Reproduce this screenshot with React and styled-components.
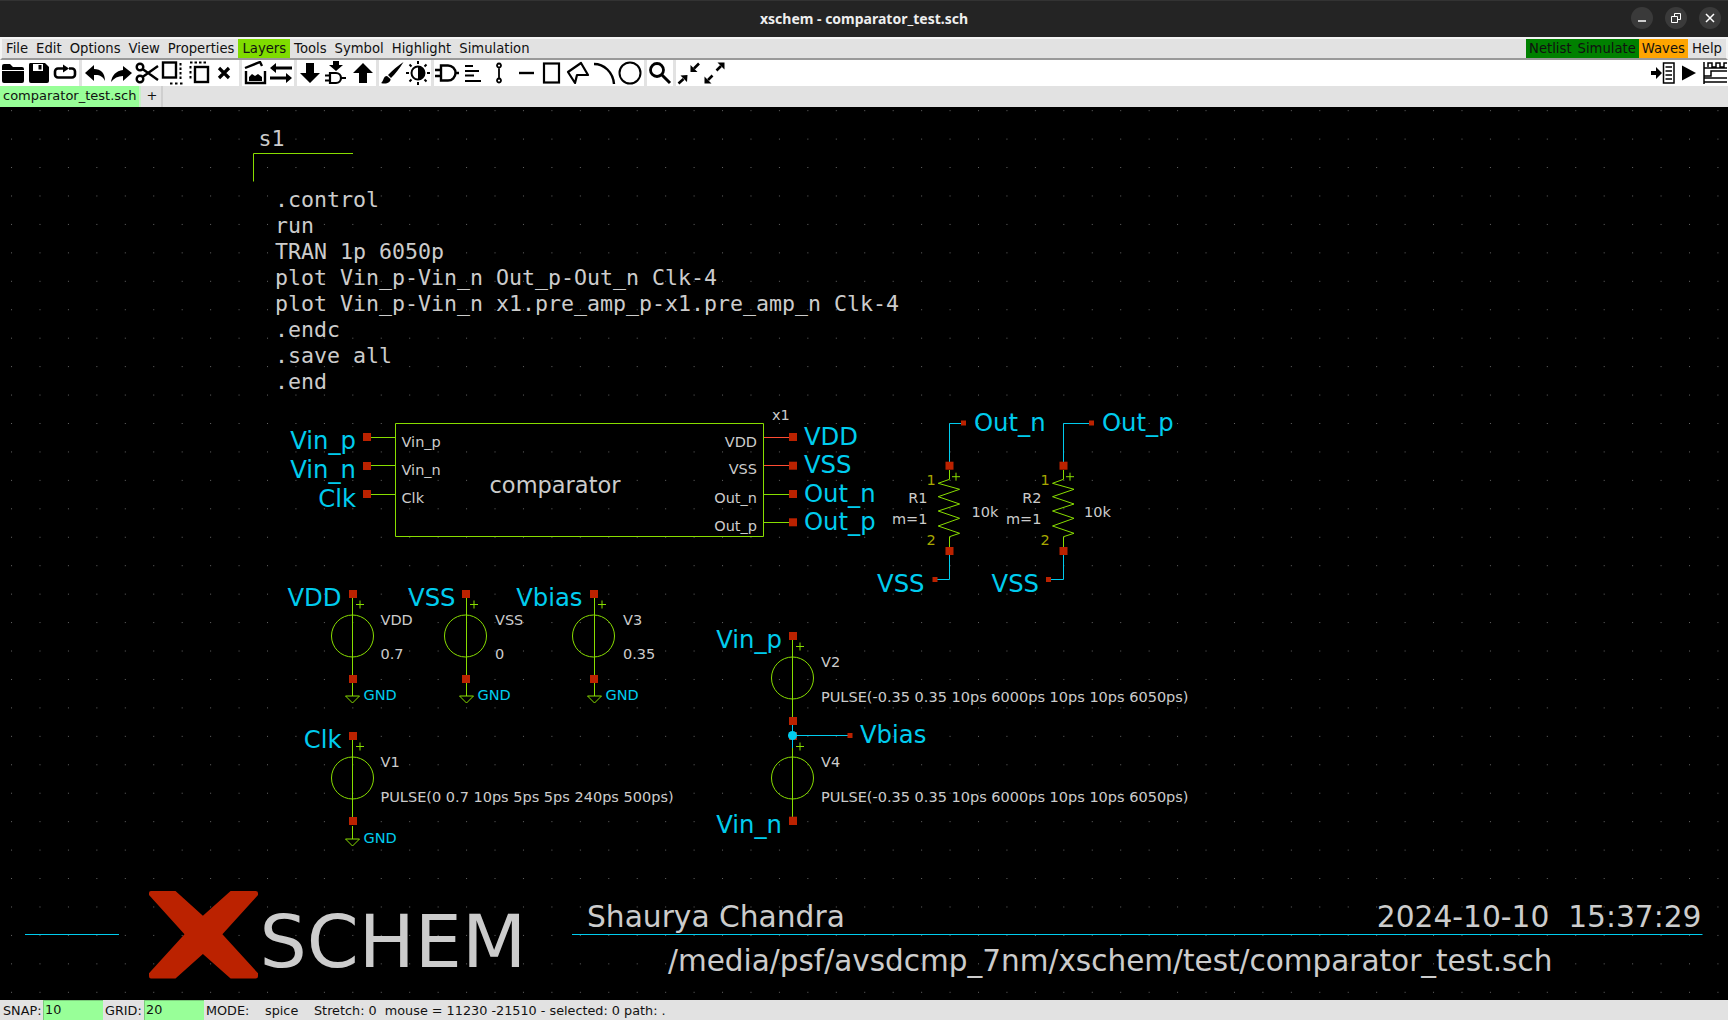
import React from 'react'
import styled, { createGlobalStyle } from 'styled-components'

const LIME = '#88dd00'
const CYAN = '#00ccee'
const PIN_RED = '#bb2200'
const TEXT_GREY = '#cccccc'
const NET_SIZE = 24.3

const GlobalStyle = createGlobalStyle`
  html, body {
    margin: 0;
    padding: 0;
    background: #000;
  }
`

const Page = styled.div`
  width: 1728px;
  height: 1020px;
  display: flex;
  flex-direction: column;
  overflow: hidden;
  font-family: 'DejaVu Sans', sans-serif;
  font-size: 13px;
  color: #111;
`

const TitleBar = styled.div`
  height: 37px;
  flex: none;
  background: #242424;
  border-top: 1px solid #333;
  box-sizing: border-box;
  display: flex;
  align-items: center;
  position: relative;
`

const TitleText = styled.div`
  flex: 1;
  text-align: center;
  color: #eee;
  font-family: 'Noto Sans', sans-serif;
  font-size: 14px;
  font-weight: 700;
  margin-top: -2px;
`

const WindowControls = styled.div`
  position: absolute;
  right: 7px;
  top: 6px;
  display: flex;
  gap: 12px;
`

const WindowButton = styled.div`
  width: 22px;
  height: 22px;
  border-radius: 50%;
  background: #3a3a3a;
  display: flex;
  align-items: center;
  justify-content: center;
`

const MenuBar = styled.div`
  height: 23px;
  flex: none;
  box-sizing: border-box;
  background: #e2e2e2;
  border-top: 2px solid #f4f4f4;
  border-left: 2px solid #f4f4f4;
  border-right: 2px solid #f4f4f4;
  border-bottom: 2px solid #999;
  display: flex;
  white-space: nowrap;
  font-size: 13.2px;
`

const MenuItem = styled.div`
  padding: 0 ${({ $tight }) => ($tight ? '3px' : '4px')};
  line-height: 19px;
  background: ${({ $bg }) => $bg || 'transparent'};
  margin-left: ${({ $push }) => ($push ? 'auto' : '0')};
`

const ToolBar = styled.div`
  height: 26px;
  flex: none;
  background: #fff;
  display: flex;
`

const ToolGroup = styled.div`
  display: flex;
  margin-left: ${({ $push }) => ($push ? 'auto' : '0')};
  border-right: ${({ $sep }) => ($sep ? '3px solid #e2e2e2' : 'none')};
`

const ToolButton = styled.div`
  width: 26.2px;
  height: 26px;
  display: flex;
  align-items: center;
  justify-content: center;
`

const ToolIcon = styled.svg`
  width: 24px;
  height: 24px;
  flex: none;
  fill: #000;
  stroke: none;
`

const TabBar = styled.div`
  height: 21px;
  flex: none;
  background: #e2e2e2;
  display: flex;
  white-space: nowrap;
`

const Tab = styled.div`
  padding: 0 ${({ $active }) => ($active ? '3px' : '4px')};
  line-height: 20px;
  text-align: center;
  background: ${({ $active }) => ($active ? '#98ff98' : '#e2e2e2')};
  border-right: 2px solid ${({ $active }) => ($active ? '#c8f0c8' : '#cfcfcf')};
  margin-right: 1px;
`

const Canvas = styled.svg`
  flex: 1;
  display: block;
  width: 1728px;
  height: 893px;
  background: #000;
`

const StatusBar = styled.div`
  height: 20px;
  flex: none;
  background: #e2e2e2;
  display: flex;
  align-items: center;
  white-space: pre;
  font-size: 12.8px;
`

const StatusLabel = styled.span`
  width: ${({ $w }) => $w}px;
  flex: none;
  padding-left: ${({ $pl }) => $pl || 0}px;
  box-sizing: border-box;
`

const StatusField = styled.span`
  width: ${({ $w }) => $w}px;
  height: 20px;
  flex: none;
  box-sizing: border-box;
  background: #98ff98;
  border-left: 1px solid #7ccc7c;
  border-top: 1px solid #7ccc7c;
  padding-left: 1px;
  line-height: 18px;
`

const SheetText = styled.text`
  font-family: ${({ $mono }) =>
    $mono ? "'DejaVu Sans Mono', monospace" : "'DejaVu Sans', sans-serif"};
  font-size: ${({ $size }) => $size || 14.5}px;
  fill: ${({ $color }) => $color || TEXT_GREY};
  text-anchor: ${({ $end }) => ($end ? 'end' : 'start')};
  white-space: pre;
`

const NetLabel = ({ children, ...rest }) => (
  <SheetText $size={NET_SIZE} $color={CYAN} dy="1" {...rest}>
    {children}
  </SheetText>
)

const Wire = styled.path`
  fill: none;
  stroke: ${({ $color }) => $color || LIME};
  stroke-width: 1;
`

const ICONS = {
  folder: (
    <path d="M1 5a2 2 0 0 1 2-2h6l3 3h9a2 2 0 0 1 2 2v1H1zM1 10h22v10a2 2 0 0 1-2 2H3a2 2 0 0 1-2-2z" />
  ),
  save: (
    <path
      fillRule="evenodd"
      d="M3 2h15l4 4v14a2 2 0 0 1-2 2H4a2 2 0 0 1-2-2V4a2 2 0 0 1 1-2zM6 3v7h10V3zM11.5 4h3v4.5h-3z"
    />
  ),
  reload: (
    <>
      <path
        d="M10 7.5H5a3 3 0 0 0-3 3v3a3 3 0 0 0 3 3h14a3 3 0 0 0 3-3v-3a3 3 0 0 0-3-3h-3"
        fill="none"
        stroke="#000"
        strokeWidth="2.6"
      />
      <path d="M10 3.5l6 4-6 4z" />
    </>
  ),
  undo: <path d="M11 4L2 12l9 8v-6c5-.5 9 1 11 6 0-8-4-12-11-12z" />,
  redo: <path d="M14 5l9 7-9 8v-5C9 15 5 17 2 21c1-7 5-11 12-12z" />,
  scissors: (
    <g fill="none" stroke="#000" strokeWidth="2.4">
      <circle cx="5" cy="6" r="3.3" />
      <circle cx="5" cy="18" r="3.3" />
      <path d="M7.5 8L23 19M7.5 16L23 5" />
    </g>
  ),
  copy: (
    <g fill="none" stroke="#000">
      <rect x="2" y="1.5" width="13" height="15" strokeWidth="2.4" />
      <path d="M19.5 2v16" strokeWidth="2" strokeDasharray="2.5 2" />
      <path d="M9 22.5h13" strokeWidth="2" strokeDasharray="2.5 2.5" />
    </g>
  ),
  move: (
    <g fill="none" stroke="#000">
      <rect x="8" y="6" width="13" height="15" strokeWidth="2.4" />
      <path d="M3 1.5h16" strokeWidth="2" strokeDasharray="2.5 2" />
      <path d="M3.5 5v13" strokeWidth="2" strokeDasharray="2.5 2.5" />
    </g>
  ),
  close: <path d="M5 7l10 10M15 7L5 17" fill="none" stroke="#000" strokeWidth="3.2" />,
  hierarchy: (
    <>
      <path d="M3 10v12h19V10M2 7l15-6 2 4" fill="none" stroke="#000" strokeWidth="2.4" />
      <path d="M6 20v-4l3-3 3 2 3-2 4 3v4z" />
    </>
  ),
  swap: <path d="M1 7l6-5v3.5h16v3H7V12zM23 17l-6-5v3.5H1v3h16V22z" />,
  down: <path d="M8 2h8v10h6L12 22 2 12h6z" />,
  downGate: (
    <>
      <path d="M9 0h6v4h4l-7 6-7-6h4z" />
      <path
        d="M6 12h6a5 5 0 0 1 0 10H6zM1 14.5h5M1 19.5h5M17 17h5"
        fill="none"
        stroke="#000"
        strokeWidth="2.2"
      />
    </>
  ),
  up: <path d="M8 22h8V12h6L12 2 2 12h6z" />,
  brush: (
    <path d="M23.5 1C18 5 12 9.5 8 14l3 3C15 13 20 7 23.5 1zM7 15c-4 0-3 5-6 7 5 1.5 10-.5 9.5-4z" />
  ),
  sun: (
    <>
      <circle cx="12" cy="12" r="6.5" fill="none" stroke="#000" strokeWidth="2" />
      <path d="M12 5.5a6.5 6.5 0 0 1 0 13z" />
      <path
        d="M12 0v3M12 21v3M0 12h3M21 12h3M3.5 3.5l2 2M18.5 18.5l2 2M3.5 20.5l2-2M18.5 5.5l2-2"
        fill="none"
        stroke="#000"
        strokeWidth="2"
      />
    </>
  ),
  gate: (
    <path
      d="M6 4.5h7a7.5 7.5 0 0 1 0 15H6zM0 9h6M0 15h6M20.5 12H24"
      fill="none"
      stroke="#000"
      strokeWidth="2.4"
    />
  ),
  lines: (
    <path d="M4 5h8M4 10h14M4 14.5h9M4 20h16" fill="none" stroke="#000" strokeWidth="2" />
  ),
  net: (
    <path
      d="M12 6v12M12 2.5a2 2 0 1 0 .01 0M12 17.5a2 2 0 1 0 .01 0"
      fill="none"
      stroke="#000"
      strokeWidth="1.8"
    />
  ),
  dash: <path d="M5 12h15" fill="none" stroke="#000" strokeWidth="2.4" />,
  rect: <rect x="4" y="2.5" width="15" height="19" fill="none" stroke="#000" strokeWidth="2.2" />,
  poly: (
    <path
      d="M15 2l7 12-11 0-2 8-7-11z"
      fill="none"
      stroke="#000"
      strokeWidth="2.2"
      strokeLinejoin="round"
    />
  ),
  arc: <path d="M2 3c10 0 19 8 20 20" fill="none" stroke="#000" strokeWidth="2.4" />,
  circle: <circle cx="12" cy="12" r="10.5" fill="none" stroke="#000" strokeWidth="2" />,
  zoom: (
    <>
      <circle cx="9" cy="9" r="6.5" fill="none" stroke="#000" strokeWidth="2.8" />
      <path d="M13.5 13.5L22 22" fill="none" stroke="#000" strokeWidth="3" />
    </>
  ),
  shrink: (
    <>
      <path d="M3.5 14.5l7-.5-.5 7zM13.5 11V4l7 7z" />
      <path d="M6.5 18l-5 4.5M17 7.5l5-5" fill="none" stroke="#000" strokeWidth="2.6" />
    </>
  ),
  expand: (
    <>
      <path d="M1.5 22.5v-7l7 7zM21.5 1.5v7l-7-7z" />
      <path d="M5 19l4.5-4.5M18 5l-4.5 4.5" fill="none" stroke="#000" strokeWidth="2.6" />
    </>
  ),
  netlist: (
    <>
      <path d="M0 10h5V6l6 6-6 6v-4H0z" />
      <rect x="12.5" y="2" width="10.5" height="20" fill="none" stroke="#000" strokeWidth="1.5" />
      <path
        d="M14.5 6h6.5M14.5 10h6.5M14.5 14h6.5M14.5 18h6.5"
        fill="none"
        stroke="#000"
        strokeWidth="1.5"
      />
    </>
  ),
  play: <path d="M5 4.5l14 7.5-14 7.5z" />,
  waves: (
    <path
      d="M1 1v22M1 7h23M1 17h23M1 21h23M5 6V2h4v4h4V2h4v4h4V2h3M1 15h7v-5h16"
      fill="none"
      stroke="#000"
      strokeWidth="1.5"
    />
  ),
}

const TOOL_GROUPS = [
  ['folder', 'save', 'reload'],
  ['undo', 'redo', 'scissors', 'copy', 'move', 'close'],
  ['hierarchy', 'swap'],
  ['down', 'downGate', 'up'],
  ['brush', 'sun'],
  ['gate', 'lines', 'net', 'dash', 'rect', 'poly', 'arc', 'circle'],
  ['zoom'],
]

const MENU = [
  'File',
  'Edit',
  'Options',
  'View',
  'Properties',
  'Layers',
  'Tools',
  'Symbol',
  'Highlight',
  'Simulation',
]

const CODE_LINES = [
  '.control',
  'run',
  'TRAN 1p 6050p',
  'plot Vin_p-Vin_n Out_p-Out_n Clk-4',
  'plot Vin_p-Vin_n x1.pre_amp_p-x1.pre_amp_n Clk-4',
  '.endc',
  '.save all',
  '.end',
]

const PULSE_DIFF = 'PULSE(-0.35 0.35 10ps 6000ps 10ps 10ps 6050ps)'

const Tool = ({ name }) => (
  <ToolButton>
    <ToolIcon viewBox="0 0 24 24">{ICONS[name]}</ToolIcon>
  </ToolButton>
)

const PinBox = ({ x, y, size = 8 }) => (
  <rect x={x - size / 2} y={y - size / 2} width={size} height={size} fill={PIN_RED} />
)

const Plus = ({ x, y }) => <Wire d={`M${x - 4} ${y}h8M${x} ${y - 4}v8`} />

const Ground = ({ x, y }) => (
  <>
    <Wire d={`M${x} ${y - 13}V${y}M${x - 7} ${y}h14L${x} ${y + 7}Z`} />
    <SheetText x={x + 11} y={y + 4} $color={CYAN}>
      GND
    </SheetText>
  </>
)

// voltage source: top pin, circle, bottom pin
const Source = ({ x, top, name, value, textX, valueY = 65, pinX = x + 0.5, circleX = x }) => (
  <>
    <Wire d={`M${x} ${top}V${top + 85}`} />
    <circle cx={circleX} cy={top + 42} r="21" fill="none" stroke={LIME} />
    <Plus x={x + 7.5} y={top + 10.5} />
    <PinBox x={pinX} y={top} />
    <PinBox x={pinX} y={top + 85} />
    <SheetText x={textX} y={top + 30.5}>
      {name}
    </SheetText>
    <SheetText x={textX} y={top + valueY}>
      {value}
    </SheetText>
  </>
)

const RES_Y = [479.3, 483.3, 489.3, 496.7, 504, 511, 518.3, 526, 533.3, 536.7]

// resistor with its two stub wires and the attribute texts
const Resistor = ({ x, left, right, name, textEnd, valueX, numX }) => {
  const pts = RES_Y.map((y, i) => {
    if (i === 0 || i === RES_Y.length - 1) return `${x} ${y}`
    return `${i % 2 === 1 ? left : right} ${y}`
  }).join('L')
  return (
    <>
      <Wire d={`M${x} 470V${RES_Y[0]}L${pts}V547`} />
      <Plus x={x + 6.5} y={476.7} />
      <PinBox x={x} y={465.7} />
      <PinBox x={x} y={551} />
      <SheetText x={numX} y={485} $color="#a8a800">
        1
      </SheetText>
      <SheetText x={numX} y={545.3} $color="#a8a800">
        2
      </SheetText>
      <SheetText x={textEnd} y={503.3} $end>
        {name}
      </SheetText>
      <SheetText x={textEnd} y={524} $end>
        m=1
      </SheetText>
      <SheetText x={valueX} y={517.3}>
        10k
      </SheetText>
    </>
  )
}

const Schematic = () => (
  <Canvas viewBox="0 107 1728 893">
    <defs>
      <pattern
        id="dots"
        x="267"
        y="423"
        width="28.44"
        height="28.44"
        patternUnits="userSpaceOnUse"
      >
        <rect width="1" height="1" fill="#666" />
      </pattern>
    </defs>
    <rect x="0" y="107" width="1728" height="893" fill="url(#dots)" />

    {/* code block */}
    <SheetText $mono $size={21.6} x="258.5" y="146">
      s1
    </SheetText>
    <Wire d="M253.5 181.5V153.5H353" />
    {CODE_LINES.map((line, i) => (
      <SheetText key={line} $mono $size={21.6} x="275" y={206.7 + i * 26}>
        {line}
      </SheetText>
    ))}

    {/* comparator symbol */}
    <Wire d="M395.5 423.5H763.5V536.5H395.5Z" />
    <Wire d="M371 437.5H395M371 465.5H395M371 494.5H395" />
    <Wire d="M764 494.5H790M764 522.5H790" />
    <Wire $color="#ff4d33" d="M764 437.5H790M764 465.5H790" />
    {[437, 466, 494].map((y) => (
      <PinBox key={y} x={367} y={y} />
    ))}
    {[437, 465.7, 494, 522.3].map((y) => (
      <PinBox key={y} x={793} y={y} />
    ))}
    <SheetText x="401.5" y="447">Vin_p</SheetText>
    <SheetText x="401.5" y="475">Vin_n</SheetText>
    <SheetText x="401.5" y="502.7">Clk</SheetText>
    <SheetText $size={22.5} x="489.5" y="492.7">comparator</SheetText>
    <SheetText x="772" y="420">x1</SheetText>
    <SheetText $end x="757" y="446.7">VDD</SheetText>
    <SheetText $end x="757" y="473.7">VSS</SheetText>
    <SheetText $end x="757" y="502.7">Out_n</SheetText>
    <SheetText $end x="757" y="531">Out_p</SheetText>

    <NetLabel $end x="356" y="447.7">Vin_p</NetLabel>
    <NetLabel $end x="356" y="477">Vin_n</NetLabel>
    <NetLabel $end x="356" y="505.7">Clk</NetLabel>
    <NetLabel x="804" y="444">VDD</NetLabel>
    <NetLabel x="804" y="471.8">VSS</NetLabel>
    <NetLabel x="804" y="501">Out_n</NetLabel>
    <NetLabel x="804" y="529">Out_p</NetLabel>

    {/* load resistors */}
    <Wire $color={CYAN} d="M963 423.5H949.5V462M949.5 551V579.5H935" />
    <Wire $color={CYAN} d="M1091 423.5H1063.5V462M1063.5 551V579.5H1048" />
    <Resistor x={949.5} left={938.2} right={959.6} name="R1" textEnd={927.5} valueX={971.5} numX={926.5} />
    <Resistor x={1063.5} left={1052.5} right={1074} name="R2" textEnd={1041.5} valueX={1084} numX={1040.5} />
    <PinBox x={963.5} y={423} size={5} />
    <PinBox x={1091.5} y={423} size={5} />
    <PinBox x={935} y={579.5} size={5} />
    <PinBox x={1048.5} y={579.5} size={5} />
    <NetLabel x="974" y="430">Out_n</NetLabel>
    <NetLabel x="1102" y="430">Out_p</NetLabel>
    <NetLabel $end x="924.5" y="591">VSS</NetLabel>
    <NetLabel $end x="1039" y="591">VSS</NetLabel>

    {/* supplies */}
    <Source x={352.5} top={594} name="VDD" value="0.7" textX={380.5} />
    <Source x={466.5} top={594} name="VSS" value="0" textX={495} pinX={466} circleX={465.5} />
    <Source x={594.5} top={594} name="V3" value="0.35" textX={623} pinX={594} circleX={593.5} />
    <Ground x={352.5} y={696} />
    <Ground x={466.5} y={696} />
    <Ground x={594.5} y={696} />
    <NetLabel $end x="341.5" y="604.7">VDD</NetLabel>
    <NetLabel $end x="455.5" y="604.7">VSS</NetLabel>
    <NetLabel $end x="582.5" y="604.7">Vbias</NetLabel>

    <Source x={352.5} top={736} name="V1" value="PULSE(0 0.7 10ps 5ps 5ps 240ps 500ps)" textX={380.5} valueY={66} />
    <Ground x={352.5} y={839} />
    <NetLabel $end x="341.5" y="746.7">Clk</NetLabel>

    {/* differential input */}
    <Source x={792.5} top={636} name="V2" value={PULSE_DIFF} textX={821} valueY={66} />
    <Source x={792.5} top={736} name="V4" value={PULSE_DIFF} textX={821} valueY={66} />
    <PinBox x={793} y={820.7} />
    <Wire $color={CYAN} d="M792.5 725V748M792.5 735.5H850" />
    <circle cx="792.5" cy="735.5" r="4.5" fill={CYAN} />
    <PinBox x={850} y={735.5} size={5} />
    <NetLabel x="860" y="742">Vbias</NetLabel>
    <NetLabel $end x="782" y="647.3">Vin_p</NetLabel>
    <NetLabel $end x="782" y="831.7">Vin_n</NetLabel>

    {/* title block */}
    <Wire $color={CYAN} d="M25 934.5H119M572 934.5H1702.5" />
    <path
      d="M149 893q0-2 2-2h24.5l27.4 24.7 27.7-24.7h25q2.4 0 2.4 2v2l-35.6 39.3 35.6 39v3q0 2.2-2.4 2.2h-25l-27.7-24.4-27.4 24.4H151q-2 0-2-2.2v-3l35.5-39-35.5-39.3z"
      fill={PIN_RED}
    />
    <SheetText $size={72.7} x="259.5" y="967.3" textLength="266.7" lengthAdjust="spacingAndGlyphs">
      SCHEM
    </SheetText>
    <SheetText $size={29.7} x="587" y="926.7">Shaurya Chandra</SheetText>
    <SheetText $size={29.7} $end x="1701.5" y="926.7">2024-10-10  15:37:29</SheetText>
    <SheetText $size={29.5} x="668" y="971">/media/psf/avsdcmp_7nm/xschem/test/comparator_test.sch</SheetText>
  </Canvas>
)

export default function App() {
  return (
    <Page>
      <GlobalStyle />
      <TitleBar>
        <TitleText>xschem - comparator_test.sch</TitleText>
        <WindowControls>
          <WindowButton>
            <svg width="10" height="10" viewBox="0 0 10 10">
              <path d="M1 8h8" stroke="#fff" strokeWidth="1.5" />
            </svg>
          </WindowButton>
          <WindowButton>
            <svg width="10" height="10" viewBox="0 0 10 10">
              <path d="M.5 3.5h6v6h-6zM3.5 3V.5h6v6H7" fill="none" stroke="#fff" />
            </svg>
          </WindowButton>
          <WindowButton>
            <svg width="10" height="10" viewBox="0 0 10 10">
              <path d="M1 1l8 8M9 1l-8 8" stroke="#fff" strokeWidth="1.5" />
            </svg>
          </WindowButton>
        </WindowControls>
      </TitleBar>
      <MenuBar>
        {MENU.map((item) => (
          <MenuItem key={item} $bg={item === 'Layers' ? '#7fdc00' : undefined}>
            {item}
          </MenuItem>
        ))}
        <MenuItem $push $tight $bg="#008000">Netlist</MenuItem>
        <MenuItem $tight $bg="#008000">Simulate</MenuItem>
        <MenuItem $tight $bg="#ffa500">Waves</MenuItem>
        <MenuItem>Help</MenuItem>
      </MenuBar>
      <ToolBar>
        {TOOL_GROUPS.map((group) => (
          <ToolGroup key={group[0]} $sep>
            {group.map((name) => (
              <Tool key={name} name={name} />
            ))}
          </ToolGroup>
        ))}
        <ToolGroup>
          <Tool name="shrink" />
          <Tool name="expand" />
        </ToolGroup>
        <ToolGroup $push>
          <Tool name="netlist" />
          <Tool name="play" />
          <Tool name="waves" />
        </ToolGroup>
      </ToolBar>
      <TabBar>
        <Tab $active>comparator_test.sch</Tab>
        <Tab>+</Tab>
      </TabBar>
      <Schematic />
      <StatusBar>
        <StatusLabel $w={43} $pl={3}>SNAP:</StatusLabel>
        <StatusField $w={60}>10</StatusField>
        <StatusLabel $w={41} $pl={2}>GRID:</StatusLabel>
        <StatusField $w={60}>20</StatusField>
        <StatusLabel $w={61} $pl={2}>MODE:</StatusLabel>
        <StatusLabel $w={49}>spice</StatusLabel>
        <span>Stretch: 0  mouse = 11230 -21510 - selected: 0 path: .</span>
      </StatusBar>
    </Page>
  )
}
